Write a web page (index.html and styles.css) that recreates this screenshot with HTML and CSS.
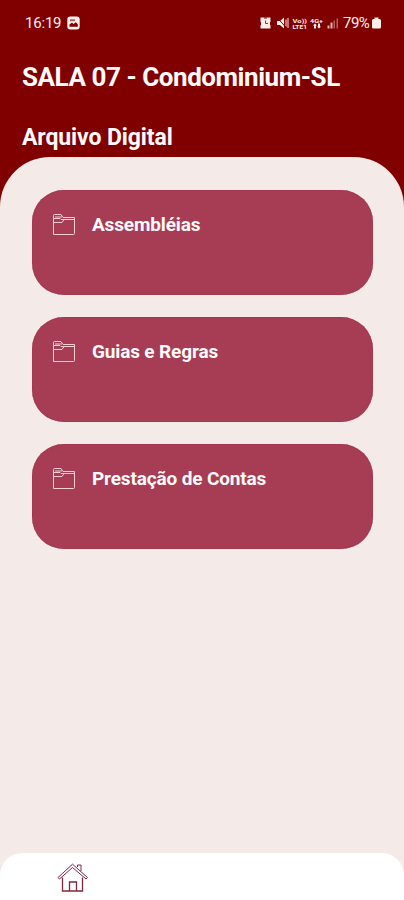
FILE: index.html
```html
<!DOCTYPE html>
<html lang="pt-BR">

  <head>
    <meta charset="UTF-8">
    <meta name="viewport" content="width=device-width, initial-scale=1.0">
    <title>Arquivo Digital</title>
    <link rel="stylesheet" href="styles.css">
  </head>

  <body>

    <div class="statusBar">
      <span class="clock">16:19</span>
      <svg class="photoIcon" width="13" height="14" viewBox="0 0 13 14">
        <rect x="0.3" y="0.5" width="12.4" height="13" rx="3" fill="#ffeeea"/>
        <path d="M2.5 8.500L5 6.500l1.500 1.400 2.300-1.700 2 2v2.600h-8.300z" fill="#800000"/>
        <rect x="3" y="3.200" width="5" height="2" fill="#b8605c"/>
      </svg>

      <div class="statusRight">
        <svg width="80" height="14" viewBox="0 0 80 14" fill="#ffeeea">
          <!-- alarm -->
          <path d="M0.500 1.500h10v11h-10z"/>
          <path d="M0.500 6v3M10.500 6v3M4 2h3" stroke="#800000"/>
          <path d="M5.500 4.500v3h2.500" fill="none" stroke="#963030"/>
          <!-- muted speaker -->
          <path d="M17 5h3l4-3.500v11L20 9h-3z"/>
          <path d="M26 3.500v7M28 2v10" stroke="#ffeeea"/>
          <path d="M17.500 2l9 10" stroke="#800000"/>
          <!-- network labels -->
          <g class="netText">
            <text x="32.500" y="6.500" textLength="14.500" lengthAdjust="spacingAndGlyphs">Vo))</text>
            <text x="32.500" y="12.500" textLength="14.500" lengthAdjust="spacingAndGlyphs">LTE1</text>
            <text x="50" y="6.500" textLength="13" lengthAdjust="spacingAndGlyphs">4G+</text>
          </g>
          <path d="M53 9.500l2-2 2 2h-1v3h-2v-3zM58 7.500h2v3h1l-2 2-2-2h1z"/>
          <!-- signal -->
          <path d="M67.500 12.500v-3h2v3zM70.500 12.500v-6h2v6z" opacity="0.750"/>
          <path d="M73.500 12.500v-8h1.500v8zM76.500 12.500v-10h1.500v10z" opacity="0.400"/>
        </svg>
        <span class="percent">79%</span>
        <svg class="battery" width="9" height="12" viewBox="0 0 9 12">
          <path d="M2.500 0.500h4v1.500h1q1.500 0 1.500 1.500v6.500q0 1.500-1.500 1.500h-6q-1.500 0-1.500-1.500v-6.500q0-1.500 1.500-1.500h1z" fill="#ffeeea"/>
        </svg>
      </div>
    </div>

    <header>
      <h1>SALA 07 - Condominium-SL</h1>
      <h2>Arquivo Digital</h2>
    </header>

    <main>
      <div class="card">
        <svg class="folderIcon" width="24" height="24" viewBox="0 0 24 24">
          <path d="M1.500 21.500V2.500q0-1 1-1h6.500l2 3h11.500v16q0 1-1 1zM1.500 5.500h6.500l1 1h13.500M1.500 9.500h8.500l2.500-3.500M3 4h7"/>
        </svg>
        <h3>Assembléias</h3>
      </div>

      <div class="card">
        <svg class="folderIcon" width="24" height="24" viewBox="0 0 24 24">
          <path d="M1.500 21.500V2.500q0-1 1-1h6.500l2 3h11.500v16q0 1-1 1zM1.500 5.500h6.500l1 1h13.500M1.500 9.500h8.500l2.500-3.500M3 4h7"/>
        </svg>
        <h3>Guias e Regras</h3>
      </div>

      <div class="card">
        <svg class="folderIcon" width="24" height="24" viewBox="0 0 24 24">
          <path d="M1.500 21.500V2.500q0-1 1-1h6.500l2 3h11.500v16q0 1-1 1zM1.500 5.500h6.500l1 1h13.500M1.500 9.500h8.500l2.500-3.500M3 4h7"/>
        </svg>
        <h3>Prestação de Contas</h3>
      </div>
    </main>

    <nav>
      <svg class="homeIcon" width="32" height="30" viewBox="0 0 32 30">
        <path d="M5.500 14.500v13.500h20v-13.500M12.500 28v-9h7v9"/>
        <path class="roof" d="M1 14.500L15.500 1.200 30.500 14.500l-1.500 1.500L15.500 4.500 2.500 16zM20.500 4v-2h3.500v6"/>
      </svg>
    </nav>

  </body>

</html>
```

FILE: styles.css
```css
body{
  margin: 0;
  height: 100vh;
  display: flex;
  flex-direction: column;
  background: #800000;
  font-family: Roboto, sans-serif;
  color: #fffafa;
  overflow: hidden;
}

.statusBar{
  display: flex;
  align-items: center;
  height: 46px;
  padding: 0 23px 0 25px;
  box-sizing: border-box;
  font-size: 15px;
  color: #ffeeea;
}
.clock{
  width: 36px;
  letter-spacing: -0.2px;
}
.photoIcon{
  margin-left: 6px;
}
.statusRight{
  display: flex;
  align-items: center;
  margin-left: auto;
}
.percent{
  width: 26px;
  margin-left: 3px;
  letter-spacing: -0.5px;
}
.battery{
  margin-left: 3px;
}
.netText{
  font-size: 6px;
  font-weight: bold;
}

header{
  height: 111px;
  padding-left: 22px;
}
h1, h2, h3{
  margin: 0;
  white-space: nowrap;
}
h1{
  padding-top: 15px;
  font-size: 26px;
  line-height: 32px;
  letter-spacing: -0.45px;
}
h2{
  padding-top: 31px;
  font-size: 23px;
  line-height: 28px;
  letter-spacing: -0.1px;
}

main{
  flex: 1;
  display: flex;
  flex-direction: column;
  gap: 22px;
  padding: 33px 31px 0 32px;
  background: #f4eae8;
  border-radius: 50px 50px 0 0;
}
.card{
  display: flex;
  align-items: flex-start;
  height: 105px;
  box-sizing: border-box;
  padding: 22px 20px;
  background: #a63d54;
  border-radius: 32px;
  box-shadow: inset 0 0 1px #960f35;
}
.folderIcon{
  margin-top: 1px;
  fill: none;
  stroke: #f3cfd3;
  stroke-width: 1;
}
h3{
  margin-left: 16px;
  font-size: 19px;
  line-height: 25px;
  letter-spacing: -0.15px;
}

nav{
  height: 47px;
  padding: 10px 0 0 57px;
  box-sizing: border-box;
  background: white;
  border-radius: 22px 22px 0 0;
  box-shadow: 0 0 0 24px #f4eae8;
  clip-path: inset(0);
}
.homeIcon{
  fill: none;
  stroke: #7d2940;
  stroke-width: 1.3;
}
.roof{
  stroke-width: 1;
}
```
